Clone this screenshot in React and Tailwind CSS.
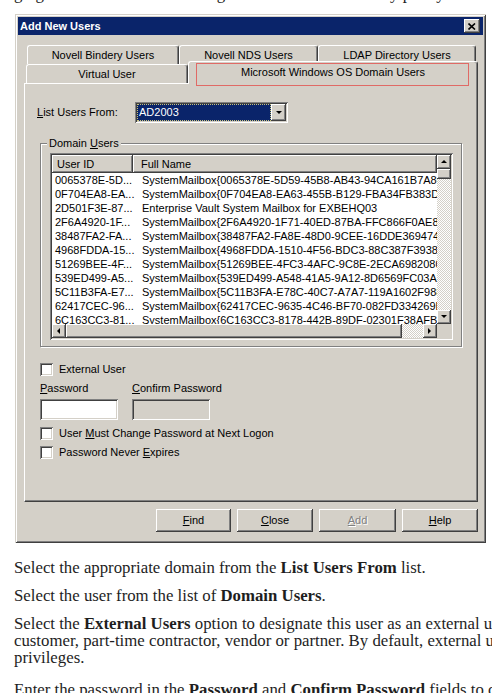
import React from 'react';

// classic 3D bevels
const raised = 'shadow-[inset_-1px_-1px_#404040,inset_1px_1px_#ffffff,inset_-2px_-2px_#808080,inset_2px_2px_#d4d0c8]';
const sunken = 'shadow-[inset_1px_1px_#808080,inset_-1px_-1px_#ffffff,inset_2px_2px_#404040,inset_-2px_-2px_#d4d0c8]';
const track = 'bg-[repeating-conic-gradient(#ffffff_0_25%,#d4d0c8_0_50%)] bg-size-[2px_2px]';

const users = [
  ['0065378E-5D...', 'SystemMailbox{0065378E-5D59-45B8-AB43-94CA161B7A80}'],
  ['0F704EA8-EA...', 'SystemMailbox{0F704EA8-EA63-455B-B129-FBA34FB383DA}'],
  ['2D501F3E-87...', 'Enterprise Vault System Mailbox for EXBEHQ03'],
  ['2F6A4920-1F...', 'SystemMailbox{2F6A4920-1F71-40ED-87BA-FFC866F0AE83}'],
  ['38487FA2-FA...', 'SystemMailbox{38487FA2-FA8E-48D0-9CEE-16DDE3694747}'],
  ['4968FDDA-15...', 'SystemMailbox{4968FDDA-1510-4F56-BDC3-88C387F39381}'],
  ['51269BEE-4F...', 'SystemMailbox{51269BEE-4FC3-4AFC-9C8E-2ECA69820802}'],
  ['539ED499-A5...', 'SystemMailbox{539ED499-A548-41A5-9A12-8D6569FC03A3}'],
  ['5C11B3FA-E7...', 'SystemMailbox{5C11B3FA-E78C-40C7-A7A7-119A1602F988}'],
  ['62417CEC-96...', 'SystemMailbox{62417CEC-9635-4C46-BF70-082FD334269B}'],
  ['6C163CC3-81...', 'SystemMailbox{6C163CC3-8178-442B-89DF-02301F38AFBF}'],
];

function Arrow({ dir }) {
  const pts = {
    up: '1,5 4,2 7,5',
    down: '1,2 4,5 7,2',
    left: '5,1 2,4 5,7',
    right: '2,1 5,4 2,7',
  }[dir];
  return (
    <svg width="8" height="8" viewBox="0 0 8 8">
      <polygon points={pts} fill="#000" />
    </svg>
  );
}

function Check({ children }) {
  return (
    <div className="flex h-[13px] items-center gap-[6px]">
      <div className={`h-[13px] w-[13px] bg-white ${sunken}`}></div>
      <span>{children}</span>
    </div>
  );
}

function Tab({ className, children }) {
  return (
    <div
      className={`flex items-center justify-center rounded-t-[3px] border-l border-t border-r border-white border-r-[#404040] shadow-[inset_-1px_0_#808080] ${className}`}
    >
      {children}
    </div>
  );
}

function Button({ w, disabled, children }) {
  return (
    <div
      className={`flex h-[23px] items-center justify-center ${w} ${raised} ${
        disabled ? 'text-[#808080] [text-shadow:1px_1px_0_#ffffff]' : ''
      }`}
    >
      {children}
    </div>
  );
}

function ListView() {
  return (
    <div className={`flex h-[187px] w-[403px] flex-col bg-white p-[2px] ${sunken}`}>
      <div className="flex min-h-0 flex-1">
        <div className="min-w-0 flex-1 overflow-hidden">
          <div className="flex h-[18px]">
            <div className={`flex w-[81px] shrink-0 items-center bg-[#d4d0c8] pl-[5px] ${raised}`}>User ID</div>
            <div className={`flex flex-1 items-center bg-[#d4d0c8] pl-[8px] ${raised}`}>Full Name</div>
          </div>
          {users.map(([id, name]) => (
            <div key={id} className="flex h-[14px] items-center whitespace-nowrap">
              <span className="w-[81px] shrink-0 pl-[3px]">{id}</span>
              <span className="pl-[9px]">{name}</span>
            </div>
          ))}
        </div>
        <div className="flex w-[14px] flex-col">
          <div className={`flex h-[14px] items-center justify-center bg-[#d4d0c8] ${raised}`}>
            <Arrow dir="up" />
          </div>
          <div className={`h-[10px] bg-[#d4d0c8] ${raised}`}></div>
          <div className={`flex-1 ${track}`}></div>
          <div className={`flex h-[14px] items-center justify-center bg-[#d4d0c8] ${raised}`}>
            <Arrow dir="down" />
          </div>
        </div>
      </div>
      <div className="flex h-[14px]">
        <div className={`flex w-[14px] items-center justify-center bg-[#d4d0c8] ${raised}`}>
          <Arrow dir="left" />
        </div>
        <div className={`w-[336px] bg-[#d4d0c8] ${raised}`}></div>
        <div className={`flex-1 ${track}`}></div>
        <div className={`flex w-[14px] items-center justify-center bg-[#d4d0c8] ${raised}`}>
          <Arrow dir="right" />
        </div>
        <div className="w-[14px] bg-[#d4d0c8]"></div>
      </div>
    </div>
  );
}

export default function App() {
  return (
    <div className="h-[693px] w-[492px] overflow-hidden bg-white font-['Liberation_Sans',Arial,sans-serif] text-[11px] leading-[13px] text-black">
      {/* tail of the caption line above */}
      <div className="h-[14px] overflow-hidden pl-[14px] font-['Liberation_Serif','Times_New_Roman',serif] text-[16.8px] leading-[17px] text-[#222]">
        <p className="-mt-[15px] whitespace-nowrap">ging the Add New Users dialog for Windows domains by policy</p>
      </div>

      {/* Add New Users dialog */}
      <div className="ml-[15px] w-[471px] bg-[#d4d0c8] p-[3px] shadow-[inset_1px_1px_#d4d0c8,inset_-1px_-1px_#404040,inset_2px_2px_#ffffff,inset_-2px_-2px_#808080]">
        <div className="flex h-[18px] items-center justify-between bg-[#0a246a] pl-[2px] pr-[3px]">
          <span className="font-bold text-white">Add New Users</span>
          <div className={`flex h-[14px] w-[16px] items-center justify-center bg-[#d4d0c8] ${raised}`}>
            <svg width="8" height="7" viewBox="0 0 8 7">
              <path d="M0.5 0.5 L7 6.5 M7 0.5 L0.5 6.5" stroke="#000" strokeWidth="1.6" />
            </svg>
          </div>
        </div>

        <div className="ml-[6px] mr-[5px] mt-[10px]">
          <div className="flex h-[19px] pl-[3px]">
            <Tab className="w-[152px]">Novell Bindery Users</Tab>
            <Tab className="w-[139px]">Novell NDS Users</Tab>
            <Tab className="w-[158px]">LDAP Directory Users</Tab>
          </div>
          <div className="flex h-[19px] items-end pl-[2px]">
            <Tab className="h-[19px] w-[162px]">Virtual User</Tab>
            <Tab className="relative top-[1px] z-10 h-[23px] w-[290px] bg-[#d4d0c8] pb-[2px]">
              Microsoft Windows OS Domain Users
              <div className="absolute bottom-[-2px] left-[7px] right-[8px] top-[1px] border border-[#e06a66]"></div>
            </Tab>
          </div>

          <div className="h-[419px] border border-white border-b-[#404040] border-r-[#404040] px-[15px] pt-[18px] shadow-[inset_-1px_-1px_#808080]">
            <div className="flex h-[21px] items-center">
              <span className="-ml-[3px] w-[98px]">
                <u>L</u>ist Users From:
              </span>
              <div className={`flex h-[21px] w-[153px] bg-white p-[2px] ${sunken}`}>
                <div className="flex flex-1 items-center border border-dotted border-[#c9c27a] bg-[#0a246a] pl-[1px] text-white">
                  AD2003
                </div>
                <div className={`flex w-[15px] items-center justify-center bg-[#d4d0c8] ${raised}`}>
                  <Arrow dir="down" />
                </div>
              </div>
            </div>

            <div className="relative mt-[20px] h-[204px] border border-[#808080] pl-[9px] pt-[9px] shadow-[inset_1px_1px_#ffffff,1px_1px_#ffffff]">
              <span className="absolute -top-[7px] left-[6px] bg-[#d4d0c8] px-[2px]">
                Domain <u>U</u>sers
              </span>
              <ListView />
            </div>

            <div className="mt-[16px]">
              <Check>External User</Check>
            </div>
            <div className="mt-[6px] flex gap-[14px]">
              <div className="flex flex-col gap-[4px]">
                <span>
                  <u>P</u>assword
                </span>
                <div className={`h-[21px] w-[78px] bg-white ${sunken}`}></div>
              </div>
              <div className="flex flex-col gap-[4px]">
                <span>
                  <u>C</u>onfirm Password
                </span>
                <div className={`h-[21px] w-[78px] bg-[#d4d0c8] ${sunken}`}></div>
              </div>
            </div>
            <div className="mt-[7px]">
              <Check>
                User <u>M</u>ust Change Password at Next Logon
              </Check>
            </div>
            <div className="mt-[6px]">
              <Check>
                Password Never <u>E</u>xpires
              </Check>
            </div>
          </div>

          <div className="mb-[8px] mt-[7px] flex justify-end gap-[6px]">
            <Button w="w-[75px]">
              <span>
                <u>F</u>ind
              </span>
            </Button>
            <Button w="w-[76px]">
              <span>
                <u>C</u>lose
              </span>
            </Button>
            <Button w="w-[77px]" disabled>
              <span>
                <u>A</u>dd
              </span>
            </Button>
            <Button w="w-[76px]">
              <span>
                <u>H</u>elp
              </span>
            </Button>
          </div>
        </div>
      </div>

      {/* steps */}
      <div className="w-[700px] whitespace-nowrap pl-[14px] pt-[16px] font-['Liberation_Serif','Times_New_Roman',serif] text-[16.8px] leading-[17px] text-[#1e1e1e]">
        <p className="mb-[11px]">
          Select the appropriate domain from the <b>List Users From</b> list.
        </p>
        <p className="mb-[11px]">
          Select the user from the list of <b>Domain Users</b>.
        </p>
        <p className="mb-[15px]">
          Select the <b>External Users</b> option to designate this user as an external user, such as a
          <br />
          customer, part-time contractor, vendor or partner. By default, external users have limited
          <br />
          privileges.
        </p>
        <p>
          Enter the password in the <b>Password</b> and <b>Confirm Password</b> fields to confirm the user.
        </p>
      </div>
    </div>
  );
}
